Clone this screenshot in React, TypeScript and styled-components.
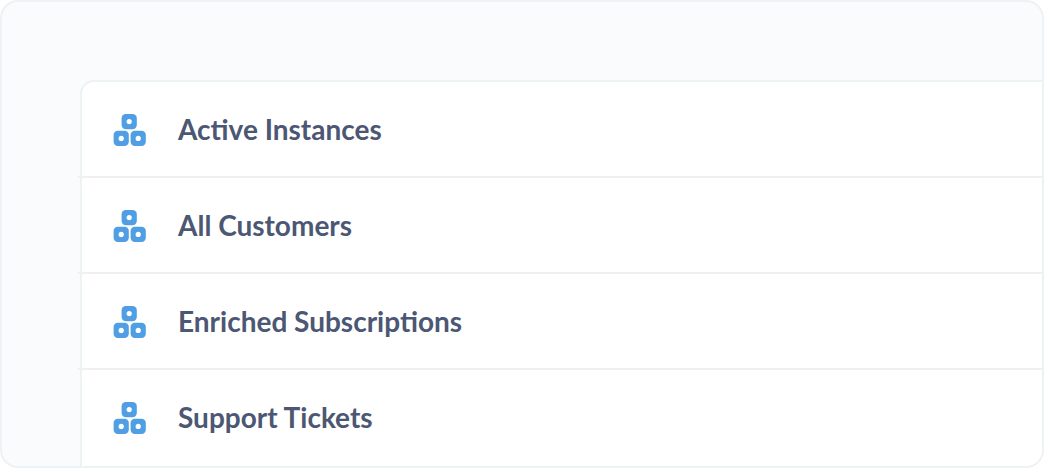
import React from "react";
import styled, { createGlobalStyle } from "styled-components";

const GlobalStyle = createGlobalStyle`
  * {
    box-sizing: border-box;
  }
  body {
    margin: 0;
    background: #ffffff;
    color: #4c5773;
    font-family: Lato, "Liberation Sans", sans-serif;
    -webkit-font-smoothing: antialiased;
  }
`;

const Frame = styled.main`
  margin-right: 14px;
  padding: 78px 0 0 78px;
  border: 2px solid #edf2f5;
  border-radius: 18px;
  background: #f9fbfd;
  overflow: hidden;
`;

const Panel = styled.ul`
  margin: 0;
  padding: 0;
  list-style: none;
  border: solid #edf2f5;
  border-width: 2px 0 0 2px;
  border-top-left-radius: 14px;
  background: #ffffff;
`;

const Row = styled.li`
  display: flex;
  align-items: flex-start;
  gap: 32px;
  margin-left: -4px;
  padding: 32px 32px 30px 35px;
  border-bottom: 2px solid #f0f0f0;

  &:last-child {
    border-bottom-color: transparent;
  }
`;

const Icon = styled.svg`
  flex: none;
  width: 33px;
  height: 32px;
  fill: #509ee3;
`;

const Label = styled.span`
  font-size: 28px;
  font-weight: 700;
  line-height: 30px;
`;

const models = [
  "Active Instances",
  "All Customers",
  "Enriched Subscriptions",
  "Support Tickets",
];

function ModelIcon() {
  return (
    <Icon viewBox="0 0 33 32" aria-hidden="true">
      <rect x="8.6" y="0" width="15.2" height="15.2" rx="4.2" />
      <rect x="0.6" y="16.8" width="15.2" height="15.2" rx="4.2" />
      <rect x="17.6" y="16.8" width="15.2" height="15.2" rx="4.2" />
      <g fill="#ffffff">
        <circle cx="16.2" cy="7.6" r="2.6" />
        <circle cx="8.2" cy="24.4" r="2.6" />
        <circle cx="25.2" cy="24.4" r="2.6" />
      </g>
    </Icon>
  );
}

export default function App() {
  return (
    <>
      <GlobalStyle />
      <Frame>
        <Panel>
          {models.map((name) => (
            <Row key={name}>
              <ModelIcon />
              <Label>{name}</Label>
            </Row>
          ))}
        </Panel>
      </Frame>
    </>
  );
}
